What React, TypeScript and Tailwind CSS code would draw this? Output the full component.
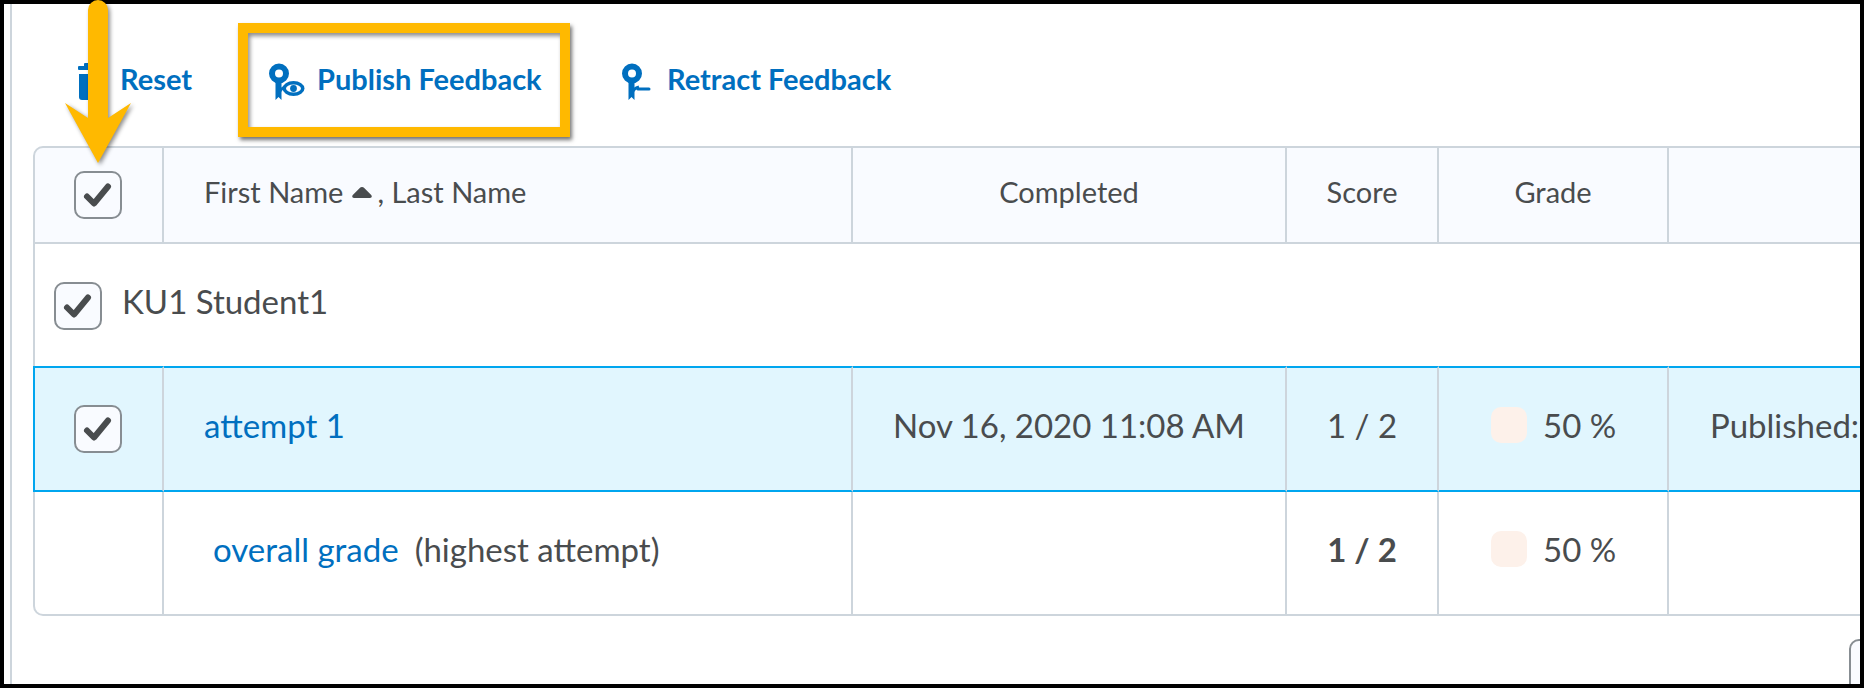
const BLUE = "#006fbf";

function Check({ className }: { className: string }) {
  return (
    <span className={`flex h-12 w-12 items-center justify-center rounded-[10px] border-2 border-[#878d92] bg-[#f9fbff] ${className}`}>
      <svg width="44" height="44" viewBox="0 0 44 44" fill="none">
        <path d="M11 23.500l7 7L32 13.500" stroke="#494c4e" strokeWidth="6" strokeLinecap="round" strokeLinejoin="round" />
      </svg>
    </span>
  );
}

function TrashIcon() {
  return (
    <svg width="22" height="38" viewBox="0 0 22 38" fill={BLUE}>
      <rect x="0" y="3" width="22" height="4" rx="1" />
      <rect x="6" y="0" width="10" height="4" rx="1" />
      <path d="M1 11h20v23a3 3 0 0 1-3 3H4a3 3 0 0 1-3-3z" />
    </svg>
  );
}

function RibbonBase() {
  return (
    <>
      <circle cx="10" cy="10.500" r="7" fill="none" stroke={BLUE} strokeWidth="6" />
      <path d="M6.500 17h6v20l-3-3-3 3z" fill={BLUE} />
      <path d="M10 30c1-3 3-5 7-6" fill="none" stroke={BLUE} strokeWidth="3" />
    </>
  );
}

function PublishIcon() {
  return (
    <svg width="36" height="38" viewBox="0 0 36 38" fill="none">
      <RibbonBase />
      <ellipse cx="24.500" cy="25.500" rx="11" ry="7.500" fill={BLUE} />
      <ellipse cx="24.500" cy="25.500" rx="7.500" ry="4" fill="#fff" />
      <circle cx="24.500" cy="25.500" r="3.400" fill={BLUE} />
    </svg>
  );
}

function RetractIcon() {
  return (
    <svg width="30" height="38" viewBox="0 0 30 38" fill="none">
      <RibbonBase />
      <rect x="14.500" y="24.500" width="14" height="3" rx="1.500" fill={BLUE} />
    </svg>
  );
}

function Swatch() {
  return <span className="-mt-[8px] h-9 w-9 rounded-[10px] bg-[#fdf1ea]" />;
}

export default function App() {
  const line = "border-r-2 border-[#cdd5dc]";
  const selected = "border-y-2 border-y-[#00a6ef] border-r-2 border-r-[#cdd5dc] bg-[#e1f6fe]";
  return (
    <div className="relative h-[688px] w-[1864px] bg-black p-1 font-['Lato',sans-serif] text-[33px] text-[#494c4e]">
      <div className="h-full overflow-hidden bg-white pl-[6px]">
        <div className="h-full border-l-2 border-[#cdd5dc] pl-[21px]">
          {/* Toolbar */}
          <div className="flex h-[142px] items-start pt-[59px] text-[29px] font-bold text-[#006fbf]">
            <div className="ml-[45px] flex w-[171px] items-center gap-[20px]">
              <TrashIcon />
              <span className="-mt-[6px] leading-[38px]">Reset</span>
            </div>
            <div className="ml-[20px] flex w-[353px] items-center gap-[12px]">
              <PublishIcon />
              <span className="-mt-[6px] leading-[38px]">Publish Feedback</span>
            </div>
            <div className="flex items-center gap-[15px]">
              <RetractIcon />
              <span className="-mt-[6px] leading-[38px]">Retract Feedback</span>
            </div>
          </div>

          {/* Attempts table */}
          <table className="w-[1900px] table-fixed border-separate border-spacing-0">
            <colgroup>
              <col className="w-[131px]" />
              <col className="w-[689px]" />
              <col className="w-[434px]" />
              <col className="w-[152px]" />
              <col className="w-[230px]" />
              <col />
            </colgroup>
            <thead>
              <tr className="h-[98px] bg-[#f9fbff] text-[29px]">
                <th className={`rounded-tl-[10px] border-y-2 border-l-2 border-[#cdd5dc] ${line}`}>
                  <Check className="ml-[39px]" />
                </th>
                <th className={`border-y-2 border-[#cdd5dc] pb-[6px] pl-[40px] text-left font-normal ${line}`}>
                  <span className="inline-flex items-center">
                    First Name
                    <svg className="ml-[9px] mr-[5px]" width="20" height="11" viewBox="0 0 20 11" fill="#494c4e">
                      <path d="M10 0c1 0 1.600.4 2.200 1l7 7c1.200 1.300.4 3-1.200 3H2C.4 11-.4 9.300.8 8l7-7c.6-.6 1.200-1 2.200-1z" />
                    </svg>
                    , Last Name
                  </span>
                </th>
                <th className={`border-y-2 border-[#cdd5dc] pb-[6px] font-normal ${line}`}>Completed</th>
                <th className={`border-y-2 border-[#cdd5dc] pb-[6px] font-normal ${line}`}>Score</th>
                <th className={`border-y-2 border-[#cdd5dc] pb-[6px] font-normal ${line}`}>Grade</th>
                <th className="border-y-2 border-[#cdd5dc]" />
              </tr>
            </thead>
            <tbody>
              <tr className="h-[122px]">
                <td colSpan={6} className="border-l-2 border-[#cdd5dc] pl-[19px] pt-[2px]">
                  <div className="flex items-center gap-[20px]">
                    <Check className="" />
                    <span className="-mt-[8px]">KU1 Student1</span>
                  </div>
                </td>
              </tr>
              <tr className="h-[126px]">
                <td className={`border-l-2 border-l-[#00a6ef] ${selected}`}>
                  <Check className="ml-[39px]" />
                </td>
                <td className={`pb-[6px] pl-[40px] text-[#006fbf] ${selected}`}>attempt 1</td>
                <td className={`pb-[6px] text-center ${selected}`}>Nov 16, 2020 11:08 AM</td>
                <td className={`pb-[6px] text-center ${selected}`}>1 / 2</td>
                <td className={selected}>
                  <div className="flex items-center pl-[52px]">
                    <Swatch />
                    <span className="-mt-[6px] ml-[16px]">50 %</span>
                  </div>
                </td>
                <td className={`pb-[6px] pl-[41px] ${selected} border-r-0`}>Published:</td>
              </tr>
              <tr className="h-[124px]">
                <td className={`rounded-bl-[10px] border-b-2 border-l-2 border-[#cdd5dc] ${line}`} />
                <td className={`border-b-2 border-[#cdd5dc] pb-[6px] pl-[49px] ${line}`}>
                  <span className="text-[#006fbf]">overall grade</span>
                  <span className="ml-4">(highest attempt)</span>
                </td>
                <td className={`border-b-2 border-[#cdd5dc] ${line}`} />
                <td className={`border-b-2 border-[#cdd5dc] pb-[6px] text-center font-bold ${line}`}>1 / 2</td>
                <td className={`border-b-2 border-[#cdd5dc] ${line}`}>
                  <div className="flex items-center pl-[52px]">
                    <Swatch />
                    <span className="-mt-[6px] ml-[16px]">50 %</span>
                  </div>
                </td>
                <td className="border-b-2 border-[#cdd5dc]" />
              </tr>
            </tbody>
          </table>

          {/* Clipped control at the bottom right */}
          <div className="flex justify-end pt-[23px]">
            <div className="-mr-[21px] h-[60px] w-[32px] shrink-0 rounded-tl-[10px] border-2 border-[#878d92] bg-[#f9fbff]" />
          </div>
        </div>
      </div>

      {/* Annotations */}
      <div className="absolute left-[238px] top-[23px] h-[114px] w-[332px] border-[10px] border-[#ffb900] shadow-[2px_3px_4px_rgba(0,0,0,0.55),inset_2px_3px_4px_rgba(0,0,0,0.45)]" />
      <svg
        className="absolute left-[60px] top-0 drop-shadow-[2px_2px_2px_rgba(0,0,0,0.45)]"
        width="76"
        height="168"
        viewBox="0 0 76 168"
      >
        <path
          d="M28 10a10 10 0 0 1 20 0v108l23-15-33 60L5 103l23 15z"
          fill="#ffb900"
        />
      </svg>
    </div>
  );
}
